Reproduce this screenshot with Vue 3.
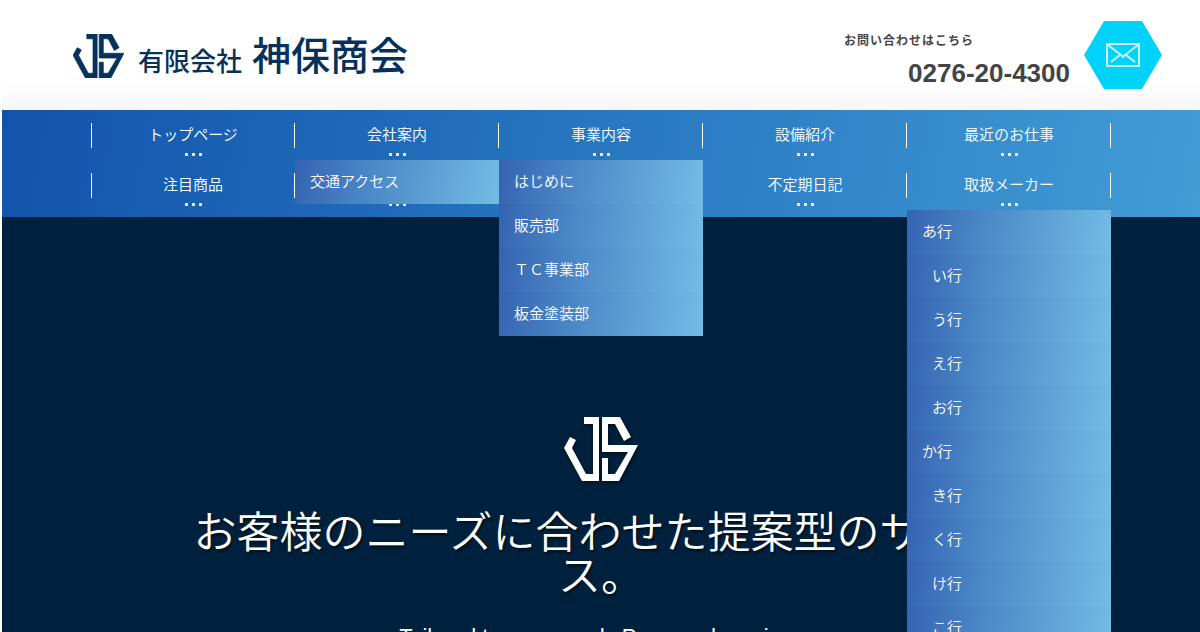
<script setup>
import { ref } from 'vue'

const menu = ref([
  { label: 'トップページ' },
  { label: '会社案内', children: [{ label: '交通アクセス' }] },
  {
    label: '事業内容',
    children: [{ label: 'はじめに' }, { label: '販売部' }, { label: 'ＴＣ事業部' }, { label: '板金塗装部' }],
  },
  { label: '設備紹介' },
  { label: '最近のお仕事' },
  { label: '注目商品' },
  { label: '' },
  { label: '' },
  { label: '不定期日記' },
  {
    label: '取扱メーカー',
    children: [
      { label: 'あ行' },
      { label: 'い行', sub: true },
      { label: 'う行', sub: true },
      { label: 'え行', sub: true },
      { label: 'お行', sub: true },
      { label: 'か行' },
      { label: 'き行', sub: true },
      { label: 'く行', sub: true },
      { label: 'け行', sub: true },
      { label: 'こ行', sub: true },
    ],
  },
])
</script>

<template>
  <div class="page">
    <header class="header">
      <a class="brand" href="#">
        <svg class="brand-mark" viewBox="0 0 74 64" aria-hidden="true">
          <path d="M20 0H35V64H18L0 31L6 20L12 23L8 31L22 57H29V7H20Z" />
          <path d="M38 0H56L67 20L60 24L51 7H44V28H74L55 64H38V41H44V57H51L64 35H38Z" />
        </svg>
        <span class="brand-type">有限会社</span>
        <span class="brand-name">神保商会</span>
      </a>
      <div class="contact">
        <div class="contact-text">
          <span class="contact-lead">お問い合わせはこちら</span>
          <a class="contact-tel" href="tel:0276-20-4300">0276-20-4300</a>
        </div>
        <a class="contact-mail" href="#" aria-label="メール">
          <svg viewBox="0 0 78 68">
            <path class="hex" d="M20 0H58L78 34L58 68H20L0 34Z" />
            <path class="envelope" d="M23 23H55V45H23ZM24 24L37 34L39 36L41 34L54 24M27 41L36 34M51 41L42 34" />
          </svg>
        </a>
      </div>
    </header>

    <nav class="nav">
      <ul class="nav-list">
        <li v-for="(item, i) in menu" :key="i" class="nav-item">
          <a class="nav-link" href="#">{{ item.label }}</a>
          <ul v-if="item.children" class="dropdown">
            <li v-for="child in item.children" :key="child.label">
              <a class="dropdown-link" :class="{ sub: child.sub }" href="#">{{ child.label }}</a>
            </li>
          </ul>
        </li>
      </ul>
    </nav>

    <main class="hero">
      <svg class="hero-mark" viewBox="0 0 74 64" aria-hidden="true">
        <path d="M20 0H35V64H18L0 31L6 20L12 23L8 31L22 57H29V7H20Z" />
        <path d="M38 0H56L67 20L60 24L51 7H44V28H74L55 64H38V41H44V57H51L64 35H38Z" />
      </svg>
      <h1 class="hero-title">お客様のニーズに合わせた提案型のサービス。</h1>
      <p class="hero-sub">Tailored to your needs Proposed services</p>
    </main>
  </div>
</template>

<style>
html {
  scrollbar-width: none;
}

body {
  margin: 0;
  background: #fff;
}
</style>

<style scoped>
.page {
  display: flex;
  flex-direction: column;
  height: 100vh;
  padding-left: 2px;
  box-sizing: border-box;
  overflow: hidden;
  font-family: "Liberation Sans", "Noto Sans CJK JP", sans-serif;
}

a {
  color: inherit;
  text-decoration: none;
}

ul {
  margin: 0;
  padding: 0;
  list-style: none;
}

/* ヘッダー */
.header {
  display: flex;
  flex-shrink: 0;
  align-items: center;
  justify-content: space-between;
  height: 110px;
  padding: 0 38px 0 71px;
  box-sizing: border-box;
  background: linear-gradient(#fff 75%, #f6f6f6);
}

.brand {
  display: flex;
  align-items: center;
  padding-top: 2px;
  color: #06315a;
  font-weight: 500;
  line-height: 44px;
}

.brand-mark {
  width: 51px;
  height: 44px;
  margin-right: 14px;
  fill: currentColor;
  stroke: currentColor;
  stroke-width: 1;
}

.brand-type {
  margin: 12px 10px 0 0;
  font-size: 26px;
}

.brand-name {
  padding-top: 2px;
  font-size: 39px;
}

.contact {
  display: flex;
  align-items: center;
  gap: 14px;
  color: #444;
}

.contact-text {
  display: flex;
  flex-direction: column;
  width: 226px;
  padding-top: 9px;
  font-weight: 700;
}

.contact-lead {
  font-size: 12px;
  line-height: 20px;
  letter-spacing: 1px;
}

.contact-tel {
  align-self: flex-end;
  margin-top: 7px;
  font-size: 26px;
  line-height: 30px;
}

.contact-mail svg {
  display: block;
  width: 78px;
  height: 68px;
}

.hex {
  fill: #00d2fa;
}

.envelope {
  fill: none;
  stroke: #c8f7ff;
  stroke-width: 2;
}

/* グローバルナビ */
.nav {
  position: relative;
  z-index: 2;
  flex-shrink: 0;
  padding-bottom: 7px;
  background: linear-gradient(100deg, #1154ac, #2877c0 50%, #429cd6);
  color: #fff;
  font-size: 15px;
  font-weight: 350;
}

.nav-list {
  display: grid;
  grid-template-columns: repeat(5, 1fr);
  max-width: 1020px;
  margin: 0 auto;
}

.nav-item {
  position: relative;
  height: 50px;
}

.nav-item::after,
.nav-item:nth-child(5n + 1)::before {
  content: "";
  position: absolute;
  top: 13px;
  right: 0;
  width: 1px;
  height: 25px;
  background: #fff;
}

.nav-item:nth-child(5n + 1)::before {
  right: auto;
  left: 0;
}

.nav-link {
  display: block;
  height: 50px;
  line-height: 50px;
  text-align: center;
}

/* 項目下の三点 */
.nav-link::after {
  content: "";
  position: absolute;
  top: 43px;
  left: calc(50% - 1px);
  width: 3px;
  height: 3px;
  border-radius: 1px;
  background: #fff;
  box-shadow: -7px 0 #fff, 7px 0 #fff;
}

.dropdown {
  position: absolute;
  z-index: 1;
  top: 50px;
  left: 0;
  width: 100%;
}

.dropdown-link {
  display: block;
  padding: 0 15px;
  background: linear-gradient(100deg, #3563b2, #4a86c6 35%, #72bde5);
  line-height: 44px;
}

.dropdown-link.sub {
  padding-left: 25px;
}

/* メインビジュアル */
.hero {
  flex: 1 0 auto;
  padding-top: 200px;
  background: #00213d;
  color: #fff;
  text-align: center;
}

.hero-mark {
  display: block;
  width: 74px;
  height: 64px;
  margin: 0 auto 31px;
  fill: currentColor;
  filter: drop-shadow(1px 2px 2px rgba(0, 0, 0, 0.5));
}

.hero-title {
  max-width: 840px;
  margin: 0 auto 25px;
  font-size: 43px;
  font-weight: 350;
  line-height: 43px;
  text-shadow: 1px 2px 3px rgba(0, 0, 0, 0.6);
}

.hero-sub {
  margin: 0;
  font-size: 22px;
  line-height: 28px;
}
</style>
